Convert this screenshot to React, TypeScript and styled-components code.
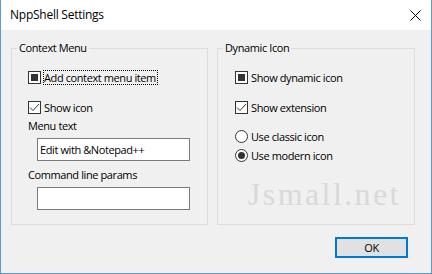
import React from "react";
import styled, { createGlobalStyle } from "styled-components";

const GlobalStyle = createGlobalStyle`
  html, body { margin: 0; padding: 0; background: #ffffff; }
  body { font-family: "Open Sans", "Noto Sans", sans-serif; font-size: 11px; letter-spacing: -0.4px; color: #000; }
  * { box-sizing: border-box; }
`;

const Window = styled.div`
  width: 432px;
  height: 274px;
  display: flex;
  flex-direction: column;
  border: 1px solid #5b9bd5;
  border-top: none;
  background: #f0f0f0;
  position: relative;
  overflow: hidden;
`;

const TitleBar = styled.div`
  height: 30px;
  flex: none;
  background: #ffffff;
  display: flex;
  align-items: center;
  justify-content: space-between;
  padding: 0 10px 0 9px;
`;

const Title = styled.span`
  font-size: 12px;
  line-height: 16px;
  letter-spacing: -0.25px;
  color: #000;
`;

const CloseIcon = styled.svg`
  display: block;
  width: 11px;
  height: 11px;
`;

const Body = styled.div`
  flex: 1;
  display: flex;
  flex-direction: column;
  padding: 18px 0 0 10px;
`;

const Groups = styled.div`
  display: flex;
  gap: 9px;
`;

const Group = styled.div<{ $width: number; $inset: number }>`
  position: relative;
  width: ${(p) => p.$width}px;
  height: 177px;
  border: 1px solid #dcdcdc;
  display: flex;
  flex-direction: column;
  align-items: flex-start;
  padding: 21px 0 0 ${(p) => p.$inset}px;
`;

const Legend = styled.span`
  position: absolute;
  top: -8px;
  left: 5px;
  padding: 0 2px;
  background: #f0f0f0;
  line-height: 14px;
  white-space: nowrap;
`;

const OptionRow = styled.label<{ $top: number }>`
  display: flex;
  align-items: center;
  height: 15px;
  margin-top: ${(p) => p.$top}px;
  white-space: nowrap;
`;

const Box = styled.span`
  width: 13px;
  height: 13px;
  flex: none;
  border: 1px solid #333333;
  background: #ffffff;
  display: flex;
  align-items: center;
  justify-content: center;
`;

const Indeterminate = styled.span`
  width: 7px;
  height: 7px;
  background: #333333;
`;

const Round = styled.span`
  width: 13px;
  height: 13px;
  flex: none;
  border: 1px solid #333333;
  border-radius: 50%;
  background: #ffffff;
  display: flex;
  align-items: center;
  justify-content: center;
`;

const Dot = styled.span`
  width: 7px;
  height: 7px;
  border-radius: 50%;
  background: #333333;
`;

const OptionText = styled.span<{ $focused?: boolean }>`
  margin-left: 2px;
  border: 1px dotted ${(p) => (p.$focused ? "#000" : "transparent")};
  line-height: 13px;
  padding: 0 1px 0 0;
`;

const FieldLabel = styled.div<{ $top: number }>`
  margin-top: ${(p) => p.$top}px;
  line-height: 14px;
  white-space: nowrap;
`;

const Edit = styled.div<{ $top: number }>`
  margin-top: ${(p) => p.$top}px;
  margin-left: 9px;
  width: 153px;
  height: 23px;
  border: 1px solid #7a7a7a;
  background: #ffffff;
  padding: 0 2px;
  display: flex;
  align-items: center;
  white-space: nowrap;
`;

const Watermark = styled.span`
  position: absolute;
  left: 30px;
  top: 129px;
  font-family: "Liberation Serif", "DejaVu Serif", serif;
  font-size: 32px;
  line-height: 32px;
  letter-spacing: 2.4px;
  color: #d9d9d9;
  pointer-events: none;
`;

const Footer = styled.div`
  display: flex;
  justify-content: flex-end;
  margin-top: 12px;
  padding-right: 23px;
`;

const OkButton = styled.button`
  width: 73px;
  height: 21px;
  border: 2px solid #0078d7;
  background: #e1e1e1;
  font-family: inherit;
  font-size: 11px;
  letter-spacing: inherit;
  color: #000;
  padding: 0;
  display: flex;
  align-items: center;
  justify-content: center;
`;

const Check = () => (
  <svg width="11" height="11" viewBox="0 0 11 11" style={{ display: "block" }}>
    <path d="M1 5.5 L4 8.5 L10 2" fill="none" stroke="#333" strokeWidth="1" />
  </svg>
);

type BoxState = "mixed" | "checked";

const CheckOption = ({ top, state, text, focused }: { top: number; state: BoxState; text: string; focused?: boolean }) => (
  <OptionRow $top={top}>
    <Box>{state === "mixed" ? <Indeterminate /> : <Check />}</Box>
    <OptionText $focused={focused}>{text}</OptionText>
  </OptionRow>
);

const RadioOption = ({ top, selected, text }: { top: number; selected?: boolean; text: string }) => (
  <OptionRow $top={top}>
    <Round>{selected && <Dot />}</Round>
    <OptionText>{text}</OptionText>
  </OptionRow>
);

export default function App() {
  return (
    <>
      <GlobalStyle />
      <Window>
        <TitleBar>
          <Title>NppShell Settings</Title>
          <CloseIcon viewBox="0 0 11 11">
            <path d="M0.5 0.5 L10.5 10.5 M10.5 0.5 L0.5 10.5" stroke="#000" strokeWidth="1" fill="none" />
          </CloseIcon>
        </TitleBar>
        <Body>
          <Groups>
            <Group $width={197} $inset={16}>
              <Legend>Context Menu</Legend>
              <CheckOption top={0} state="mixed" text="Add context menu item" focused />
              <CheckOption top={15} state="checked" text="Show icon" />
              <FieldLabel $top={4}>Menu text</FieldLabel>
              <Edit $top={5}>Edit with &amp;Notepad++</Edit>
              <FieldLabel $top={7}>Command line params</FieldLabel>
              <Edit $top={5} />
            </Group>
            <Group $width={198} $inset={17}>
              <Legend>Dynamic Icon</Legend>
              <CheckOption top={0} state="mixed" text="Show dynamic icon" />
              <CheckOption top={15} state="checked" text="Show extension" />
              <RadioOption top={14} text="Use classic icon" />
              <RadioOption top={4} selected text="Use modern icon" />
              <Watermark>Jsmall.net</Watermark>
            </Group>
          </Groups>
          <Footer>
            <OkButton>OK</OkButton>
          </Footer>
        </Body>
      </Window>
    </>
  );
}
